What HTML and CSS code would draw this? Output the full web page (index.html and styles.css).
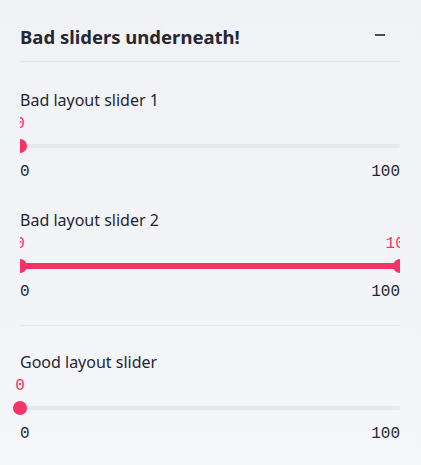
FILE: index.html
```html
<!DOCTYPE html>
<html>
<head>
<meta charset="utf-8">
<link rel="stylesheet" href="styles.css">
</head>
<body>
<div class="panel">
  <div class="header">
    <span class="title">Bad sliders underneath!</span>
    <span class="collapse"></span>
  </div>
  <div class="body">
    <div class="field">
      <div class="label">Bad layout slider 1</div>
      <div class="slider clipped">
        <div class="values">
          <span class="val" style="left:0%">0</span>
        </div>
        <div class="track-row">
          <div class="track"></div>
          <span class="thumb" style="left:0%"></span>
        </div>
      </div>
      <div class="ticks"><span>0</span><span>100</span></div>
    </div>
    <div class="field">
      <div class="label">Bad layout slider 2</div>
      <div class="slider clipped">
        <div class="values">
          <span class="val" style="left:0%">0</span>
          <span class="val" style="left:100%">100</span>
        </div>
        <div class="track-row">
          <div class="track"><div class="fill" style="left:0%;width:100%"></div></div>
          <span class="thumb" style="left:0%"></span>
          <span class="thumb" style="left:100%"></span>
        </div>
      </div>
      <div class="ticks"><span>0</span><span>100</span></div>
    </div>
    <hr class="divider">
    <div class="field">
      <div class="label">Good layout slider</div>
      <div class="slider">
        <div class="values">
          <span class="val" style="left:0%">0</span>
        </div>
        <div class="track-row">
          <div class="track"></div>
          <span class="thumb" style="left:0%"></span>
        </div>
      </div>
      <div class="ticks"><span>0</span><span>100</span></div>
    </div>
  </div>
</div>
</body>
</html>
```
FILE: styles.css
```css
html, body {
  margin: 0;
  padding: 0;
}
body {
  width: 421px;
  height: 465px;
  overflow: hidden;
  background: linear-gradient(#f0f2f6, #f5f6f9);
  font-family: "Noto Sans", "DejaVu Sans", sans-serif;
  color: #262730;
}
.panel {
  padding: 0 21px 0 20px;
}
.header {
  height: 62px;
  display: flex;
  align-items: center;
  justify-content: space-between;
  border-bottom: 1px solid #e4e6eb;
  box-sizing: border-box;
  padding-top: 12px;
}
.title {
  font-size: 18.5px;
  font-weight: 700;
  line-height: 24px;
}
.collapse {
  width: 10px;
  height: 2px;
  background: #4a4b55;
  margin-right: 15px;
  margin-bottom: 3px;
}
.body {
  padding-top: 26px;
}
.field {
  display: flex;
  flex-direction: column;
}
.field + .field {
  margin-top: 24px;
}
.label {
  font-size: 16px;
  line-height: 24px;
}
.slider {
  position: relative;
}
.slider.clipped {
  overflow: hidden;
}
.values {
  position: relative;
  height: 24px;
  font-family: "Liberation Mono", "DejaVu Sans Mono", monospace;
  font-size: 16px;
  line-height: 24px;
  color: #f63366;
}
.val {
  position: absolute;
  top: 0;
  transform: translateX(-50%);
}
.track-row {
  position: relative;
  height: 20px;
  display: flex;
  align-items: center;
}
.track {
  position: relative;
  flex: 1;
  height: 4px;
  border-radius: 2px;
  background: #e6e8ee;
}
.fill {
  position: absolute;
  top: -1px;
  bottom: -1px;
  background: #f63366;
}
.thumb {
  position: absolute;
  top: 3px;
  width: 14px;
  height: 14px;
  border-radius: 50%;
  background: #f63366;
  transform: translateX(-50%);
}
.ticks {
  display: flex;
  justify-content: space-between;
  font-family: "Liberation Mono", "DejaVu Sans Mono", monospace;
  font-size: 16px;
  line-height: 24px;
  margin-top: 4px;
}
.divider {
  border: 0;
  border-top: 1px solid #e4e6eb;
  margin: 21px 0 0;
}
.divider + .field {
  margin-top: 24px;
}
```
